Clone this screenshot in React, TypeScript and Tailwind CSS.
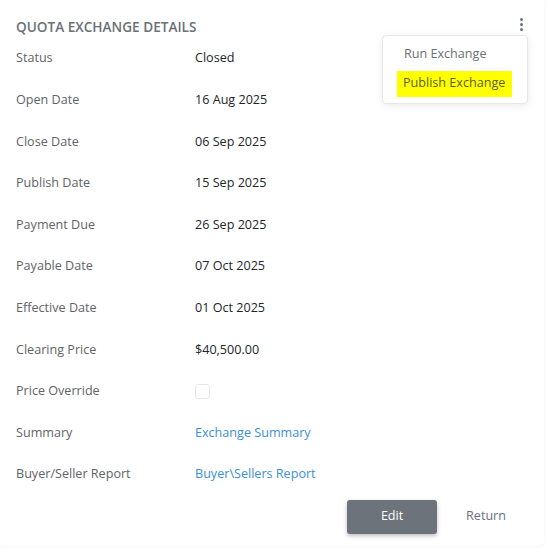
import React from "react";

const rows: { label: string; value: React.ReactNode }[] = [
  { label: "Status", value: "Closed" },
  { label: "Open Date", value: "16 Aug 2025" },
  { label: "Close Date", value: "06 Sep 2025" },
  { label: "Publish Date", value: "15 Sep 2025" },
  { label: "Payment Due", value: "26 Sep 2025" },
  { label: "Payable Date", value: "07 Oct 2025" },
  { label: "Effective Date", value: "01 Oct 2025" },
  { label: "Clearing Price", value: "$40,500.00" },
  {
    label: "Price Override",
    value: <span className="block h-[15px] w-[15px] rounded-[3px] border border-[#e5e7eb] bg-white" />,
  },
  { label: "Summary", value: <a className="text-[#3d8fd4]">Exchange Summary</a> },
  { label: "Buyer/Seller Report", value: <a className="text-[#3d8fd4]">Buyer\Sellers Report</a> },
];

export default function App() {
  return (
    <div className="h-[553px] w-[548px] bg-white font-['Open_Sans',sans-serif] text-[12.6px]">
      <div className="relative h-[546px] w-[544px] rounded-br-md bg-white px-4 pt-[19px] shadow-[0_1px_4px_rgba(0,0,0,0.04)]">
        <div className="flex items-center justify-between">
          <h2 className="text-[13.6px] font-semibold uppercase leading-[16px] text-[#6b7077]">
            Quota Exchange Details
          </h2>
          <button className="mr-[1px] -mt-[6px] flex h-4 w-3 flex-col items-center justify-center gap-[2px]">
            <span className="h-[3px] w-[3px] rounded-full bg-[#6b7280]" />
            <span className="h-[3px] w-[3px] rounded-full bg-[#6b7280]" />
            <span className="h-[3px] w-[3px] rounded-full bg-[#6b7280]" />
          </button>
        </div>

        <div className="mt-[3px] grid grid-cols-[179px_1fr] auto-rows-[41.6px]">
          {rows.map((r) => (
            <React.Fragment key={r.label}>
              <div className="flex items-center text-[#5f6368]">{r.label}</div>
              <div className="flex items-center text-[#212529]">{r.value}</div>
            </React.Fragment>
          ))}
        </div>

        <div className="mt-[4px] flex items-center justify-end gap-[29px] pr-[22px]">
          <button className="h-[34px] w-[90px] rounded-[3px] bg-[#6c737b] text-white shadow-[0_2px_4px_rgba(0,0,0,0.25)]">
            Edit
          </button>
          <button className="text-[#6b7280]">Return</button>
        </div>

        <div className="absolute right-[16px] top-[35px] w-[146px] rounded-[4px] border border-[#e5e7eb] bg-white px-[15px] pb-[6px] pt-[4px] shadow-[0_2px_8px_rgba(0,0,0,0.08)]">
          <div className="whitespace-nowrap px-[6px] py-[5px] text-[#6b7077]">Run Exchange</div>
          <div className="-ml-[1px] mt-[2px] flex h-[26px] items-center whitespace-nowrap bg-[#ffff00] px-[6px] text-[#5b5e2a]">
            Publish Exchange
          </div>
        </div>
      </div>
    </div>
  );
}
